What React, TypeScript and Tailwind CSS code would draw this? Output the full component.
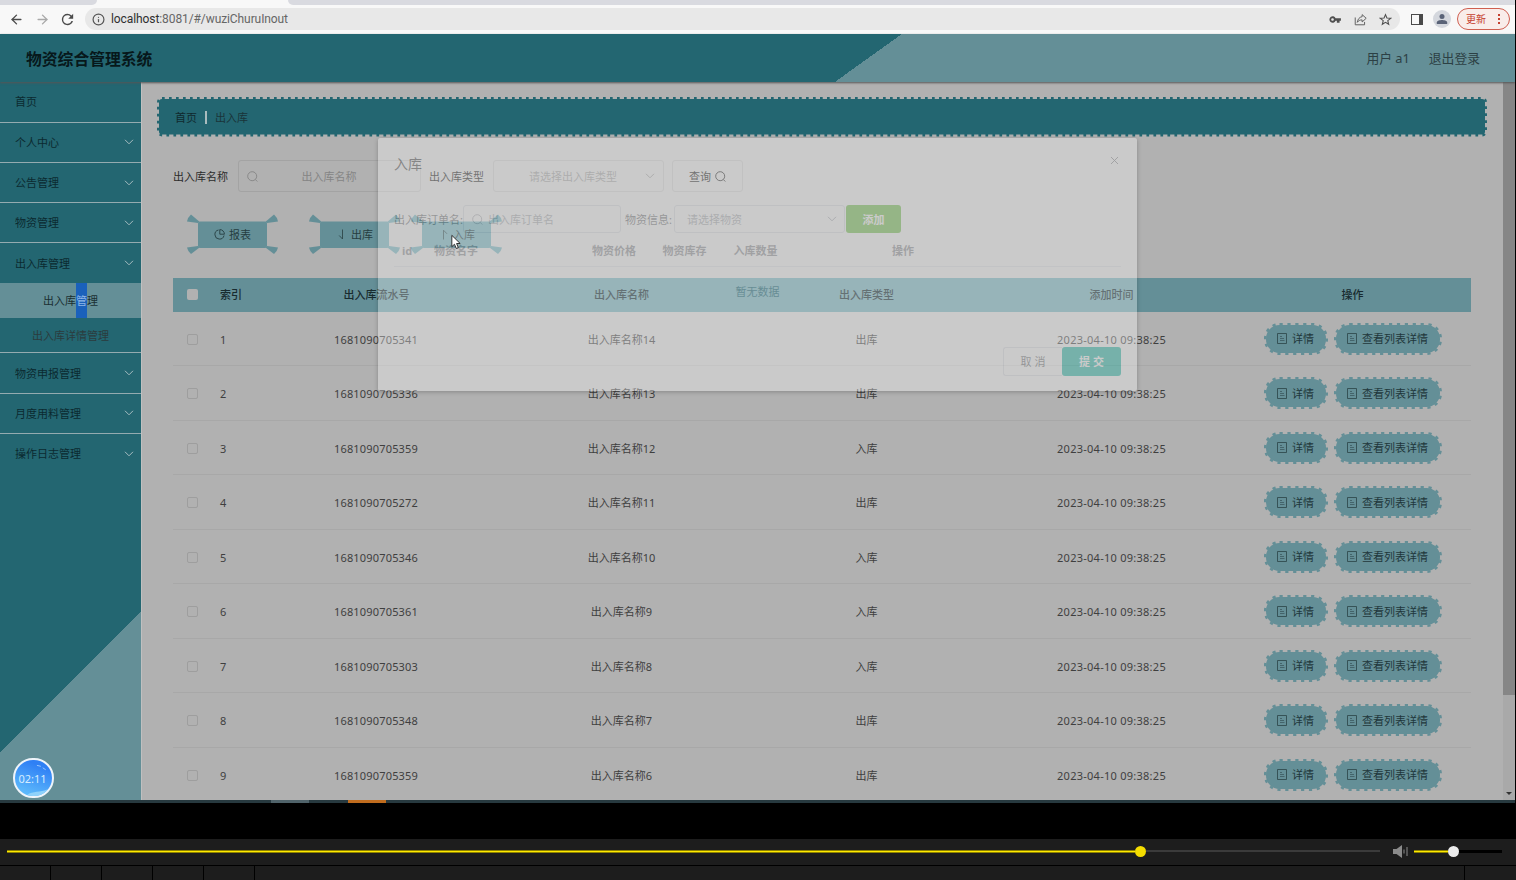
import { ArrowLeft, ArrowRight, Info, X } from "lucide-react";

type TableRow = {
  id: number;
  serial: string;
  name: string;
  type: string;
  time: string;
};

const SERIALS = [
  "1681090705341",
  "1681090705336",
  "1681090705359",
  "1681090705272",
  "1681090705346",
  "1681090705361",
  "1681090705303",
  "1681090705348",
  "1681090705359",
];
const TYPES = ["出库", "出库", "入库", "出库", "入库", "入库", "入库", "出库", "出库"];

const ROWS: TableRow[] = SERIALS.map((serial, i) => ({
  id: i + 1,
  serial,
  name: `出入库名称${14 - i}`,
  type: TYPES[i],
  time: "2023-04-10 09:38:25",
}));

const GRID = "grid grid-cols-[40px_41px_245px_245px_245px_245px_1fr] items-center";

function SearchIcon() {
  return (
    <svg viewBox="0 0 11 11" className="h-[11px] w-[11px] shrink-0" fill="none" stroke="currentColor" strokeWidth=".9">
      <circle cx="5.200" cy="5.200" r="4.500" />
      <path d="M8.300 8.500 10.300 10.500" />
    </svg>
  );
}

function Chevron() {
  return (
    <svg viewBox="0 0 10 6" className="h-[6px] w-[10px] shrink-0" fill="none" stroke="currentColor" strokeWidth="1">
      <path d="M1 .8 5 4.800 9 .8" />
    </svg>
  );
}

function PieIcon() {
  return (
    <svg viewBox="0 0 11 11" className="h-[11px] w-[11px]" fill="none" stroke="currentColor" strokeWidth=".9">
      <path d="M4.500 1A4.600 4.600 0 1 0 10 6.500" />
      <path d="M5.800.6V5.200H10.400A4.600 4.600 0 0 0 5.800.6Z" />
    </svg>
  );
}

function DocIcon() {
  return (
    <svg viewBox="0 0 10 11" className="relative h-[11px] w-[10px]" fill="none" stroke="#2b4347" strokeOpacity=".8">
      <path d="M.5.5H9.500V10.500H.5Z" />
      <path d="M3 3.500H5M3 5.500H7M3 7.500H7.500" strokeWidth=".7" />
    </svg>
  );
}

function ArrowGlyph({ up = false }: { up?: boolean }) {
  return (
    <svg viewBox="0 0 11 11" className="h-[11px] w-[11px]" fill="none" stroke="#2f474b" strokeWidth=".9">
      {up ? <path d="M5.500 10.500V1.200L9 4.800" /> : <path d="M6.500.5V10L3.200 6.500" />}
    </svg>
  );
}

function BrowserBar() {
  return (
    <div className="h-[34px] bg-[#f8f8f8]">
      <div className="flex h-[5px] justify-between bg-[#f8f8f8]">
        <div className="w-[97px] rounded-br-[5px] bg-[#d9dae0]" />
        <div className="w-[1227px] rounded-bl-[5px] bg-[#d9dae0]" />
      </div>
      <div className="flex h-7 items-center">
        <ArrowLeft className="ml-[9px] h-[15px] w-[15px] text-[#4b4b4b]" strokeWidth={2.2} />
        <ArrowRight className="ml-[11px] h-[15px] w-[15px] text-[#a9a9a9]" strokeWidth={2.2} />
        <svg viewBox="0 0 24 24" className="ml-[9px] h-[17px] w-[17px]" fill="#4b4b4b">
          <path d="M17.65 6.35A7.96 7.96 0 0 0 12 4a8 8 0 1 0 7.73 10h-2.08A6 6 0 1 1 12 6c1.66 0 3.14.69 4.22 1.78L13 11h7V4z" />
        </svg>
        <div className="ml-[9px] flex h-[22px] w-[1315px] items-center rounded-full bg-[#e8e8e8] pr-[8px] pl-[7px]">
          <Info className="h-[13px] w-[13px] text-[#555]" strokeWidth={2.2} />
          <span className="ml-[6px] font-['Roboto',sans-serif] text-[12px] tracking-[-.09px] text-[#666]">
            <span className="text-[#2f2f2f]">localhost</span>:8081/#/wuziChuruInout
          </span>
          <div className="ml-auto flex items-center">
            <svg viewBox="0 0 24 24" className="h-[13px] w-[13px]" fill="#4f4f4f">
              <path d="M22 9.500H12.200A6 6 0 1 0 12.200 14.500H14.500V18H19.500V14.500H22ZM6.500 14.500A2.500 2.500 0 1 1 6.500 9.500A2.500 2.500 0 0 1 6.500 14.500Z" fillRule="evenodd" />
            </svg>
            <svg viewBox="0 0 16 16" className="ml-[12px] h-[13px] w-[13px]" fill="none" stroke="#606060" strokeWidth="1.2">
              <path d="M1.500 5.500V14.500H13V11" />
              <path d="M10 2 15 6.500 10 11V8.500C7 8.500 5.500 9.500 4 11.500C4.500 8 6.500 5 10 4.500Z" strokeLinejoin="round" />
            </svg>
            <svg viewBox="0 0 24 24" className="ml-[12px] h-[13px] w-[13px]" fill="none" stroke="#4f4f4f" strokeWidth="2">
              <path d="m12 3 2.600 6.300 6.900.5-5.300 4.400 1.700 6.700L12 17.300 6.100 20.900l1.700-6.700L2.500 9.800l6.900-.5z" />
            </svg>
          </div>
        </div>
        <div className="ml-[11px] h-[11px] w-[12px] border-[1.5px] border-r-[4px] border-[#4a4a4a]" />
        <div className="ml-[10px] flex h-[18px] w-[18px] items-center justify-center rounded-full bg-[#d4d7dd]">
          <svg viewBox="0 0 12 12" className="h-[12px] w-[12px]" fill="#5a6377">
            <circle cx="6" cy="3.400" r="2.500" />
            <path d="M.8 11V9.500C.8 7.700 4 7 6 7s5.200.7 5.200 2.500V11z" />
          </svg>
        </div>
        <div className="ml-[6px] flex h-[22px] w-[53px] items-center rounded-full border border-[#cf5f50] bg-[#f9edea] pl-[8px] text-[10px] text-[#c5402f]">
          更新
          <div className="ml-[12px] flex flex-col gap-[2px]">
            <i className="h-[2px] w-[2px] bg-[#c5402f]" />
            <i className="h-[2px] w-[2px] bg-[#c5402f]" />
            <i className="h-[2px] w-[2px] bg-[#c5402f]" />
          </div>
        </div>
      </div>
    </div>
  );
}

function MenuItem({ label, arrow = true, line = true }: { label: string; arrow?: boolean; line?: boolean }) {
  return (
    <div
      className={`flex h-[40.3px] items-center justify-between border-b pr-[7px] pl-[15px] text-[#0b2a30] ${
        line ? "border-[#94abb0]" : "border-transparent"
      }`}
    >
      {label}
      {arrow && (
        <span className="text-[#a5bcc0]">
          <Chevron />
        </span>
      )}
    </div>
  );
}

function Sidebar() {
  return (
    <aside className="relative h-[718px] w-[141px] shrink-0 bg-[linear-gradient(135deg,#236671_78%,#648f97_78%)] pt-[.3px]">
      <MenuItem label="首页" arrow={false} />
      <MenuItem label="个人中心" />
      <MenuItem label="公告管理" />
      <MenuItem label="物资管理" />
      <MenuItem label="出入库管理" line={false} />
      <div className="-mt-[.6px] flex h-[35px] items-center justify-center bg-[#648f97] text-[#1b2f33]">
        出入库<span className="flex h-full items-center bg-[#1a61bb] text-[#8fb6e6]">管</span>理
      </div>
      <div className="flex h-[35.200px] items-center justify-center border-b border-[#94abb0] text-[#2b3c3e]">
        出入库详情管理
      </div>
      <MenuItem label="物资申报管理" />
      <MenuItem label="月度用料管理" />
      <MenuItem label="操作日志管理" line={false} />
      <div className="absolute top-[676px] left-[13px] flex h-[40px] w-[41px] items-center justify-center overflow-hidden rounded-full border-2 border-[#eef4fa] bg-[linear-gradient(200deg,#2f80f5_20%,#5cb8fb_85%)] text-[11px] text-[#d5ecff]">
        <svg viewBox="0 0 37 37" className="absolute inset-0 h-full w-full" fill="none">
          <path d="M12 36C18 31 25 34 33 30L30 37H12Z" fill="#8fd2fb" />
          <path d="M22 5.500l4 1M28 8l3 2" stroke="#9cc9fb" strokeWidth="1" />
        </svg>
        <span className="relative -left-[1px]">02:11</span>
      </div>
    </aside>
  );
}

// solid plate with a row of small teeth round its edge
function ToothedPlate({ width, height, radius, color, dash }: { width: number; height: number; radius: number; color: string; dash: string }) {
  return (
    <svg className="absolute inset-0 h-full w-full" fill="none">
      <rect x="2" y="2" width={width - 4} height={height - 4} rx={radius - 2} fill={color} />
      <rect
        x="1.200"
        y="1.200"
        width={width - 2.4}
        height={height - 2.4}
        rx={radius - 1.2}
        stroke={color}
        strokeWidth="2.400"
        strokeDasharray={dash}
      />
    </svg>
  );
}

function Breadcrumb() {
  return (
    <div className="relative flex h-[39.500px] w-[1330px] items-center pt-px pl-[18px] text-[#10292e]">
      <ToothedPlate width={1330} height={39.5} radius={5} color="#236671" dash="2.700 4.300" />
      <span className="relative">首页</span>
      <span className="relative mx-[8px] h-[13px] w-[2px] bg-[#a9bcbe]" />
      <span className="relative text-[#1a3439]">出入库</span>
    </div>
  );
}

// button whose four corners flare out like ribbon ends
function RibbonButton({ icon, label }: { icon: React.ReactNode; label: string }) {
  return (
    <div className="relative flex h-[40px] w-[91px] items-center justify-center gap-[4px] text-[#263d41]">
      <svg viewBox="0 0 91 40" className="absolute inset-0 h-full w-full" fill="#648f97">
        <rect x="11" y="7.500" width="69" height="26.500" rx="2" />
        <path d="M4 .5 12.500 7.700 11 9 0 7.500Q1 3 4 .5Z" />
        <path d="M87 .5 78.500 7.700 80 9 91 7.500Q90 3 87 .5Z" />
        <path d="M4 40 12.500 33.500 11 32 0 33.500Q1 38 4 40Z" />
        <path d="M87 40 78.500 33.500 80 32 91 33.500Q90 38 87 40Z" />
      </svg>
      <span className="relative">{icon}</span>
      <span className="relative">{label}</span>
    </div>
  );
}

function ActionButton({ label, wide = false }: { label: string; wide?: boolean }) {
  return (
    <div
      className={`relative flex h-[32px] items-center justify-center gap-[5px] text-[#1f373b] ${
        wide ? "w-[108px]" : "w-[64px]"
      }`}
    >
      <ToothedPlate width={wide ? 108 : 64} height={32} radius={15.5} color="#648f97" dash="3.200 4.700" />
      <DocIcon />
      <span className="relative">{label}</span>
    </div>
  );
}

function Filters() {
  return (
    <div className="mt-[23.500px] ml-4 flex h-8 items-center text-[#2c2c2c]">
      出入库名称
      <div className="ml-[9.500px] flex h-8 w-[183px] items-center rounded-[3px] border border-[#a3a3a3] pr-[19px] pl-2 text-[#858585]">
        <SearchIcon />
        <span className="flex-1 text-center">出入库名称</span>
      </div>
      <span className="ml-[8.500px]">出入库类型</span>
      <div className="ml-[9px] flex h-8 w-[171px] items-center rounded-[3px] border border-[#a3a3a3] pr-2 text-[#858585]">
        <span className="flex-1 pl-[7px] text-center">请选择出入库类型</span>
        <Chevron />
      </div>
      <div className="ml-2 flex h-8 w-[71px] items-center justify-center gap-[4px] rounded-[3px] border border-[#a3a3a3]">
        查询
        <SearchIcon />
      </div>
    </div>
  );
}

function DataTable() {
  return (
    <div className="mt-[23.500px] ml-4 w-[1298px] text-[#3f3f3f]">
      <div className={`${GRID} h-[34px] bg-[#648f97] text-center font-medium text-[#182b2f]`}>
        <i className="mr-auto ml-[14px] h-[11px] w-[11px] rounded-[2px] bg-[#b1b1b1]" />
        <span className="-mt-px pl-[7px] text-left">索引</span>
        <span className="-mt-px">出入库流水号</span>
        <span className="-mt-px">出入库名称</span>
        <span className="-mt-px">出入库类型</span>
        <span className="-mt-px">添加时间</span>
        <span className="-mt-px">操作</span>
      </div>
      {ROWS.map((row) => (
        <div key={row.id} className={`${GRID} h-[54.500px] border-b border-[#a8a8a8] text-center`}>
          <i className="mt-[2px] mr-auto ml-[14px] h-[11px] w-[11px] rounded-[2px] border border-[#9e9e9e]" />
          <span className="pt-[2px] pl-[7px] text-left">{row.id}</span>
          <span className="pt-[2px] pr-px tracking-[.17px]">{row.serial}</span>
          <span className="pt-[2px]">{row.name}</span>
          <span className="pt-[2px]">{row.type}</span>
          <span className="pt-[2px] tracking-[.26px]">{row.time}</span>
          <div className="flex justify-center gap-[6px] pt-px">
            <ActionButton label="详情" />
            <ActionButton label="查看列表详情" wide />
          </div>
        </div>
      ))}
    </div>
  );
}

// dialog caught half way through its fade-in
function StockInDialog() {
  return (
    <div className="absolute top-[138px] left-[378px] h-[253px] w-[759px] rounded-[2px] bg-white px-4 text-[11px] text-[#606266] opacity-[.33] shadow-[0_1px_4px_rgba(0,0,0,.7)]">
      <div className="flex h-[67px] justify-between pt-[19px]">
        <span className="text-[14px] text-[#303133]">入库</span>
        <X className="-mt-[3px] h-[13px] w-[13px] text-[#707378]" strokeWidth={1.600} />
      </div>
      <div className="flex h-[28px] items-center">
        <span className="w-[69px] whitespace-nowrap">出入库订单名:</span>
        <div className="flex h-[28px] w-[158px] items-center gap-[5px] rounded-[3px] border border-[#dcdfe6] pl-[8px] text-[#a0a3aa]">
          <SearchIcon />
          出入库订单名
        </div>
        <span className="ml-[4px] w-[49px]">物资信息:</span>
        <div className="flex h-[28px] w-[171px] items-center justify-between rounded-[3px] border border-[#dcdfe6] pr-[7px] pl-[12px] text-[#a0a3aa]">
          请选择物资
          <Chevron />
        </div>
        <div className="ml-px flex h-[28px] w-[55px] items-center justify-center rounded-[3px] bg-[#5fbe30] font-bold text-white">
          添加
        </div>
      </div>
      <div className="grid h-[34px] grid-cols-[26px_158px_71px_71px_71px_1fr] items-center border-b border-[#e6e9f0] pt-[2px] text-center font-bold text-[#7f8288]">
        <span>id</span>
        <span className="pl-[14px] text-left">物资名字</span>
        <span className="pl-[1px]">物资价格</span>
        <span>物资库存</span>
        <span>入库数量</span>
        <span className="pl-[101px] text-left">操作</span>
      </div>
      <div className="flex h-[48px] items-center justify-center text-[#6f8a90]">暂无数据</div>
      <div className="mt-[32px] flex justify-end">
        <div className="flex h-[29px] w-[59px] items-center justify-center rounded-l-[3px] border border-r-0 border-[#dcdfe6]">
          取 消
        </div>
        <div className="flex h-[29px] w-[59px] items-center justify-center rounded-[3px] bg-[#00b49d] font-bold text-white">
          提 交
        </div>
      </div>
    </div>
  );
}

function PlayerBar() {
  return (
    <div className="flex flex-1 flex-col bg-black pt-9">
      <div className="flex h-[26px] items-center bg-[#1d1d1d] pb-[2px] pl-[7px]">
        <div className="h-[3px] w-[1128px] border-y border-[#8f8300] bg-[#ffea00]" />
        <div className="h-[11px] w-[11px] rounded-full bg-[#f5dd00]" />
        <div className="h-[2px] w-[234px] bg-[#3b3b3b]" />
        <svg viewBox="0 0 15 13" className="ml-[13px] h-[13px] w-[15px]" fill="#8b8b8b">
          <path d="M0 4H3.500L9 0V13L3.500 9H0Z" />
          <path d="M10.500 4.500h1v4h-1zM13.500 2h1v9h-1z" />
        </svg>
        <div className="ml-[6px] h-[3px] w-[34px] border-y border-[#8f8300] bg-[#ffea00]" />
        <div className="h-[11px] w-[11px] rounded-full bg-[#ececec]" />
        <div className="h-[3px] w-[43px] bg-black" />
      </div>
      <div className="mt-px flex flex-1 gap-px">
        <div className="w-[50px] bg-[#1d1d1d]" />
        <div className="w-[50px] bg-[#1d1d1d]" />
        <div className="w-[50px] bg-[#1d1d1d]" />
        <div className="w-[50px] bg-[#1d1d1d]" />
        <div className="w-[50px] bg-[#1d1d1d]" />
        <div className="flex-1 bg-[#1d1d1d]" />
        <div className="w-[51px] bg-[#1d1d1d]" />
      </div>
    </div>
  );
}

export default function App() {
  return (
    <div className="relative flex h-[880px] w-[1516px] flex-col overflow-hidden bg-black font-['Noto_Sans','Noto_Sans_CJK_SC',sans-serif] text-[11px] leading-none">
      <div className="h-[800px] w-[1515px] overflow-hidden bg-[#b1b1b1]">
        <BrowserBar />
        <header className="relative z-10 flex h-12 items-center justify-between bg-[linear-gradient(144.4deg,#236671_525px,#648f97_525px)] pr-[35px] pl-[26px] shadow-[0_1px_2px_#555]">
          <h1 className="pt-[3px] text-[15.800px] font-bold text-[#07181b]">物资综合管理系统</h1>
          <div className="flex gap-[19px] text-[12.800px] text-[#2c4044]">
            <span>用户 a1</span>
            <span>退出登录</span>
          </div>
        </header>
        <div className="flex h-[718px]">
          <Sidebar />
          <main className="h-full w-[1362px] overflow-hidden border-l border-[#c0c0c0] pt-[15px] pl-[15px]">
            <Breadcrumb />
            <Filters />
            <div className="mt-[22px] ml-[30px] flex">
              <RibbonButton icon={<PieIcon />} label="报表" />
              <div className="ml-[31px]">
                <RibbonButton icon={<ArrowGlyph />} label="出库" />
              </div>
              <div className="ml-[11px]">
                <RibbonButton icon={<ArrowGlyph up />} label="入库" />
              </div>
            </div>
            <DataTable />
          </main>
          <div className="flex w-[12px] flex-col items-center justify-between bg-[#a9a9a9]">
            <div className="h-[613px] w-full bg-[#868686]" />
            <div className="mb-[5px] border-x-[3px] border-t-[3px] border-x-transparent border-t-[#333]" />
          </div>
        </div>
      </div>
      <div className="flex h-[3px] w-[1515px] bg-[#27393f]">
        <div className="ml-[271px] w-[38px] bg-[#50636a]" />
        <div className="ml-[39px] w-[38px] bg-[#c06c1e]" />
      </div>
      <PlayerBar />
      <StockInDialog />
      <svg viewBox="0 0 12 18" className="absolute top-[234px] left-[451px] z-20 h-[16px] w-[10px]">
        <path d="M1 1V14.500L4.200 11.700 6.300 16.800 8.800 15.700 6.700 10.800H11Z" fill="#fff" stroke="#222" strokeWidth="1.100" />
      </svg>
    </div>
  );
}
